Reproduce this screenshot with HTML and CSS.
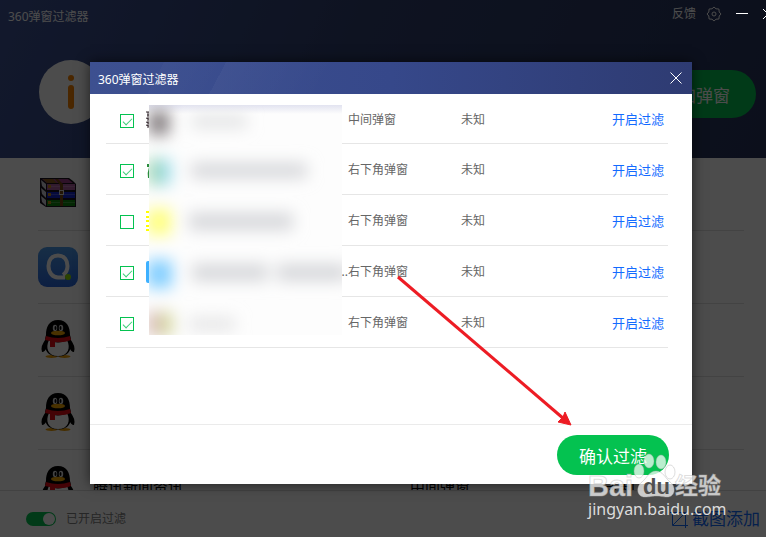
FILE: index.html
```html
<!DOCTYPE html>
<html lang="zh-CN">
<head>
    <meta charset="UTF-8">
    <title>360弹窗过滤器</title>
    <link rel="stylesheet" href="styles.css">
</head>
<body>
    <!-- shared icons -->
    <svg class="sprites" aria-hidden="true">
        <symbol id="qq" viewBox="0 0 40 40">
            <ellipse cx="13.500" cy="36.500" rx="6" ry="1.500" fill="#e89a00"/>
            <ellipse cx="26.500" cy="36.500" rx="6" ry="1.500" fill="#e89a00"/>
            <path d="M8 19Q2 26 4 32Q7 32 9 27ZM32 19Q38 26 36 32Q33 32 31 27Z" fill="#000"/>
            <path d="M20 0C11 0 8 7 8 15C6 21 6 30 11 34Q20 39 29 34C34 30 34 21 32 15C32 7 29 0 20 0Z" fill="#000"/>
            <path d="M11 20Q20 25 29 20C33 28 30 36 20 36C10 36 7 28 11 20Z" fill="#fff"/>
            <ellipse cx="17" cy="8" rx="2.200" ry="3.300" fill="#ddd"/>
            <ellipse cx="23" cy="8" rx="2.200" ry="3.300" fill="#ddd"/>
            <ellipse cx="17.500" cy="8" rx="1" ry="2" fill="#000"/>
            <ellipse cx="22.500" cy="8" rx="1" ry="2" fill="#000"/>
            <ellipse cx="20" cy="13" rx="7" ry="2.300" fill="#f5a800"/>
            <path d="M8 16Q20 20 32 16L33 20Q26 23 17 22V27H12V21L7 20Z" fill="#e30b16"/>
        </symbol>
    </svg>

    <div class="app">
        <header class="app-header">
            <div class="title-bar">
                <h1>360弹窗过滤器</h1>
                <a href="#feedback">反馈</a>
                <button class="icon-btn" aria-label="设置">
                    <svg width="16" height="16" viewBox="0 0 16 16" fill="none" stroke="#fff">
                        <path d="M8 1L10 2.800L12.900 3L13.200 6L15 8L13.200 10L12.900 13L10 13.200L8 15L6 13.200L3.100 13L2.800 10L1 8L2.800 6L3.100 3L6 2.800Z"/>
                        <circle cx="8" cy="8" r="2"/>
                    </svg>
                </button>
                <button class="icon-btn window-btn" aria-label="最小化">
                    <svg width="12" height="12" viewBox="0 0 12 12" stroke="#fff"><path d="M0 5.500H12"/></svg>
                </button>
                <button class="icon-btn window-btn" aria-label="关闭">
                    <svg width="12" height="12" viewBox="0 0 12 12" stroke="#fff"><path d="M1 1L11 11M11 1L1 11"/></svg>
                </button>
            </div>
            <div class="banner">
                <svg width="64" height="64" viewBox="0 0 64 64">
                    <circle cx="32" cy="32" r="32" fill="#fff"/>
                    <circle cx="32" cy="18" r="3" fill="#f78200"/>
                    <rect x="29" y="25" width="6" height="24" rx="3" fill="#f78200"/>
                </svg>
                <button class="add-btn">添加弹窗</button>
            </div>
        </header>

        <ul class="app-list">
            <li>
                <svg width="40" height="40" viewBox="0 0 40 40">
                    <path d="M2 4H31L35 7L38 10V33H8L2 29Z" fill="#18121c"/>
                    <path d="M4 5H30L35 9H9Z" fill="#9a3c86"/>
                    <path d="M5 5H15L19 9H9Z" fill="#8a5a1e"/>
                    <path d="M9 10H37V16H9Z" fill="#a85a9c"/>
                    <path d="M9 18H37V24H9Z" fill="#1726cd"/>
                    <path d="M9 26H37V32H9Z" fill="#108710"/>
                    <path d="M3 6L8 10V16L4 12ZM3 14L8 18V24L4 20ZM3 22L8 26V32L4 28Z" fill="#cfcfd9"/>
                    <path d="M10 12.500H37M10 20.500H37M10 28.500H37" stroke="#fff" stroke-opacity=".2"/>
                    <path d="M10 11H13V14H10ZM10 19H13V22H10ZM10 27H13V30H10Z" fill="#c78b17"/>
                    <path d="M17 5H20L25 10V32H22V11Z" fill="#754713"/>
                    <rect x="21.500" y="16.500" width="4" height="4" fill="none" stroke="#ddd"/>
                </svg>
            </li>
            <li>
                <svg width="40" height="40" viewBox="0 0 40 40">
                    <defs>
                        <linearGradient id="browser" x2="0" y2="1">
                            <stop stop-color="#4d9bea"/>
                            <stop offset="1" stop-color="#2967dc"/>
                        </linearGradient>
                    </defs>
                    <rect width="40" height="40" rx="9" fill="url(#browser)"/>
                    <path d="M20 8.500C13.500 8.500 10.500 13.500 10.500 19C10.500 26 15 30.500 20 30.500H27M20 8.500C26.500 8.500 29.500 13.500 29.500 19C29.500 23 28 26 25 28" fill="none" stroke="#fff" stroke-width="4"/>
                    <circle cx="30" cy="30" r="3" fill="#92e200"/>
                </svg>
            </li>
            <li><svg width="40" height="40"><use href="#qq"/></svg></li>
            <li><svg width="40" height="40"><use href="#qq"/></svg></li>
            <li>
                <svg width="40" height="40"><use href="#qq"/></svg>
                <span class="app-name">腾讯新闻资讯</span>
                <span class="app-type">中间弹窗</span>
                <span>未知</span>
            </li>
        </ul>

        <footer class="app-footer">
            <input type="checkbox" id="filter-on" class="switch" checked>
            <label for="filter-on">已开启过滤</label>
            <a href="#capture">
                <svg width="18" height="18" viewBox="0 0 18 18" fill="none" stroke="#136bff">
                    <path d="M0 2.500H15.500V18M2.500 0V15.500H18M3 15L15 3"/>
                </svg>
                截图添加
            </a>
        </footer>

        <div class="overlay">
            <section class="dialog" role="dialog" aria-labelledby="dialog-title">
                <div class="dialog-header">
                    <h2 id="dialog-title">360弹窗过滤器</h2>
                    <button class="icon-btn" aria-label="关闭">
                        <svg width="12" height="12" viewBox="0 0 12 12" stroke="#fff"><path d="M.5.5L11.500 11.500M11.500.5L.5 11.500"/></svg>
                    </button>
                </div>
                <div class="dialog-body">
                    <table>
                        <colgroup>
                            <col class="col-check"><col class="col-name"><col class="col-type"><col><col class="col-action">
                        </colgroup>
                        <tbody>
                            <tr>
                                <td><input type="checkbox" class="check" aria-label="选择第1项" checked></td>
                                <td><svg class="item-icon" width="24" height="24" viewBox="0 0 24 24"><path d="M0 4H5M1 7H5M0 10L5 12M0 14L5 16M0 17L5 19M2 4V20" stroke="#34282e"/></svg></td>
                                <td>中间弹窗</td>
                                <td>未知</td>
                                <td><a href="#filter1">开启过滤</a></td>
                            </tr>
                            <tr>
                                <td><input type="checkbox" class="check" aria-label="选择第2项" checked></td>
                                <td><svg class="item-icon" width="24" height="24" viewBox="0 0 24 24"><path d="M1 6H6V7H3V9H1ZM3 9H6V20H2Q1 15 3 9Z" fill="#2a8c3c"/></svg></td>
                                <td>右下角弹窗</td>
                                <td>未知</td>
                                <td><a href="#filter2">开启过滤</a></td>
                            </tr>
                            <tr>
                                <td><input type="checkbox" class="check" aria-label="选择第3项"></td>
                                <td><svg class="item-icon" width="24" height="24" viewBox="0 0 24 24"><path d="M0 3H24M0 8H24M0 12H24M0 17H24M0 21H24" stroke="#ffff00" stroke-width="2"/></svg></td>
                                <td>右下角弹窗</td>
                                <td>未知</td>
                                <td><a href="#filter3">开启过滤</a></td>
                            </tr>
                            <tr>
                                <td><input type="checkbox" class="check" aria-label="选择第4项" checked></td>
                                <td>
                                    <div class="item">
                                        <svg class="item-icon" width="24" height="24" viewBox="0 0 24 24"><rect y="1" width="24" height="22" rx="2" fill="#3db0ff"/></svg>
                                        <span>...</span>
                                    </div>
                                </td>
                                <td>右下角弹窗</td>
                                <td>未知</td>
                                <td><a href="#filter4">开启过滤</a></td>
                            </tr>
                            <tr>
                                <td><input type="checkbox" class="check" aria-label="选择第5项" checked></td>
                                <td></td>
                                <td>右下角弹窗</td>
                                <td>未知</td>
                                <td><a href="#filter5">开启过滤</a></td>
                            </tr>
                        </tbody>
                    </table>
                    <!-- blurred names -->
                    <svg class="mosaic" width="193" height="230" viewBox="0 0 193 230">
                        <defs>
                            <filter id="soft" x="-50%" y="-100%" width="200%" height="300%"><feGaussianBlur stdDeviation="8"/></filter>
                            <linearGradient id="edge" x2="0" y2="1"><stop stop-color="#e2e3f0"/><stop offset="1" stop-color="#fdfdfd"/></linearGradient>
                        </defs>
                        <rect width="193" height="230" fill="#fdfdfd"/>
                        <rect width="193" height="9" fill="url(#edge)"/>
                        <g filter="url(#soft)">
                            <rect x="0" y="6" width="20" height="24" fill="#80797c"/>
                            <rect x="0" y="54" width="12" height="26" fill="#92d0a0"/>
                            <rect x="10" y="54" width="12" height="26" fill="#9bdcea"/>
                            <rect x="-2" y="104" width="24" height="26" fill="#ffff7c"/>
                            <rect x="-2" y="155" width="25" height="28" fill="#80ceff"/>
                            <rect x="-2" y="207" width="14" height="24" fill="#d8b8b8"/>
                            <rect x="10" y="207" width="14" height="24" fill="#d6d8a0"/>
                            <g fill="#d6d7da">
                                <rect x="43" y="10" width="55" height="13" fill="#e2e3e4"/>
                                <rect x="42" y="58" width="116" height="15"/>
                                <rect x="40" y="108" width="104" height="17"/>
                                <rect x="43" y="159" width="76" height="17"/>
                                <rect x="128" y="159" width="70" height="17"/>
                                <rect x="40" y="212" width="46" height="14" fill="#e6e6e7"/>
                            </g>
                        </g>
                    </svg>
                </div>
                <div class="dialog-footer">
                    <button class="confirm-btn">确认过滤</button>
                </div>
                <svg class="arrow" width="180" height="156" viewBox="0 0 180 156">
                    <path d="M4 3L170 145" stroke="#ed1c24" stroke-width="3"/>
                    <path d="M177 151L164 148L169 143L171 138Z" fill="#ed1c24" stroke="#ed1c24"/>
                </svg>
            </section>
        </div>

        <svg class="watermark" width="144" height="72" viewBox="0 0 144 72">
            <g fill="#fff" fill-opacity=".72" stroke="#aaa" stroke-opacity=".4">
                <text class="wm-latin" x="2" y="45">Bai</text>
                <path d="M70 20C63 20 61 27 56 31C50 35 50 46 59 46C64 46 66 45 70 45C75 45 77 46 81 46C90 46 90 35 84 31C79 27 77 20 70 20Z"/>
                <ellipse cx="53" cy="20" rx="5" ry="7"/>
                <ellipse cx="63" cy="10" rx="5" ry="7"/>
                <ellipse cx="75" cy="11" rx="5" ry="7"/>
                <ellipse cx="84" cy="21" rx="5" ry="7"/>
                <text class="wm-cjk" x="89" y="43">经验</text>
            </g>
            <text class="wm-du" x="57" y="43">du</text>
            <text class="wm-url" x="2" y="64">jingyan.baidu.com</text>
        </svg>
    </div>
</body>
</html>
```

FILE: styles.css
```css
* {
    box-sizing: border-box;
}
body {
    margin: 0;
    height: 100vh;
    overflow: hidden;
    font-family: "Noto Sans", "Noto Sans CJK SC", sans-serif;
    font-size: 12px;
    line-height: 18px;
    color: #666;
}
h1, h2 {
    margin: 0;
    font-size: 12px;
    font-weight: normal;
    color: #fff;
}
a {
    color: #136bff;
    text-decoration: none;
}
button {
    border: none;
    font-family: inherit;
    color: #fff;
    cursor: pointer;
}
svg {
    display: block;
    flex-shrink: 0;
}
.sprites {
    position: absolute;
    width: 0;
    height: 0;
}
.icon-btn {
    padding: 0;
    background: none;
}

/* main window, slightly larger than the viewport */
.app {
    position: relative;
    display: flex;
    flex-direction: column;
    width: calc(100% + 16px);
    height: calc(100% + 9px);
    background: #fff;
}
.app-header {
    height: 158px;
    flex-shrink: 0;
    background: linear-gradient(115deg, #3d5296 0%, #30406f 45%, #28345c 100%);
}
.title-bar {
    display: flex;
    align-items: center;
    height: 28px;
    padding: 0 8px;
}
.title-bar h1 {
    flex: 1;
    padding-top: 6px;
}
.title-bar a {
    margin-right: 10px;
    color: #fff;
}
.window-btn {
    position: relative;
    z-index: 2;
    margin-left: 14px;
}
.banner {
    display: flex;
    align-items: center;
    justify-content: space-between;
    padding: 32px 26px 0 39px;
}
.add-btn {
    height: 48px;
    margin-top: 4px;
    padding: 0 26px;
    border-radius: 24px;
    background: #04c250;
    font-size: 17px;
}
.app-list {
    flex: 1;
    min-height: 0;
    margin: 0;
    padding: 0 38px;
    overflow: hidden;
    list-style: none;
    font-size: 15px;
    color: #000;
}
.app-list li {
    display: flex;
    align-items: center;
    height: 73px;
    border-bottom: 1px solid #e0e0e0;
}
.app-name {
    width: 317px;
    margin-left: 15px;
}
.app-type {
    width: 195px;
}
.app-footer {
    display: flex;
    align-items: center;
    height: 56px;
    padding: 0 22px 0 26px;
    border-top: 1px solid #dcdcdc;
}
.app-footer label {
    flex: 1;
    margin-left: 10px;
    color: #808080;
}
.app-footer a {
    display: flex;
    align-items: center;
    gap: 4px;
    font-size: 17px;
}
.switch {
    appearance: none;
    display: flex;
    justify-content: flex-end;
    width: 30px;
    height: 14px;
    margin: 0;
    padding: 1px;
    border-radius: 7px;
    background: #04c250;
}
.switch::after {
    content: "";
    width: 12px;
    height: 12px;
    border-radius: 50%;
    background: #fff;
}

/* dialog */
.overlay {
    position: absolute;
    inset: 0;
    display: flex;
    padding: 62px 90px;
    background: rgba(0, 0, 0, .7);
}
.dialog {
    position: relative;
    flex: 1;
    display: flex;
    flex-direction: column;
    background: #fff;
    box-shadow: 0 0 12px rgba(0, 0, 0, .6);
}
.dialog-header {
    display: flex;
    align-items: center;
    justify-content: space-between;
    height: 32px;
    padding: 0 10px 0 8px;
    background:
        linear-gradient(118deg, transparent 12%, rgba(255, 255, 255, .02) 12%, transparent 22%, rgba(255, 255, 255, .03) 22%, transparent 40%),
        linear-gradient(90deg, #3d5090, #36488a 50%, #2e3b72);
}
.dialog-header h2 {
    padding-top: 3px;
}
.dialog-body {
    position: relative;
    flex: 1;
    padding: 0 24px 0 16px;
}
table {
    width: 100%;
    table-layout: fixed;
    border-collapse: collapse;
}
td {
    height: 51px;
    padding: 3px 0 0;
    border-bottom: 1px solid #e6e6e6;
}
tr:first-child td {
    height: 49px;
}
.col-check {
    width: 40px;
}
.col-name {
    width: 202px;
}
.col-type {
    width: 113px;
}
.col-action {
    width: 56px;
}
td a {
    font-size: 13px;
}
.item {
    display: flex;
    align-items: center;
    justify-content: space-between;
}
.check {
    appearance: none;
    display: block;
    width: 14px;
    height: 14px;
    margin: 2px 0 0 14px;
    border: 1px solid #04c250;
}
.check:checked::after {
    content: "";
    display: block;
    width: 8px;
    height: 4px;
    margin: 3px 2px;
    border: solid #3dd078;
    border-width: 0 0 1px 1px;
    transform: rotate(-45deg);
}
.mosaic {
    position: absolute;
    top: 11px;
    left: 59px;
}
.dialog-footer {
    display: flex;
    justify-content: flex-end;
    padding: 10px 23px 9px;
    border-top: 1px solid #ebebeb;
}
.confirm-btn {
    height: 40px;
    padding: 0 22px;
    border-radius: 20px;
    background: #04c250;
    font-size: 17px;
}
.arrow {
    position: absolute;
    right: 118px;
    bottom: 54px;
}

.watermark {
    position: absolute;
    right: 52px;
    bottom: 23px;
}
.wm-latin {
    font: bold 29px "Liberation Sans", sans-serif;
}
.wm-du {
    font: bold 22px "Liberation Sans", sans-serif;
    fill: #505050;
}
.wm-cjk {
    font: bold 23px "Noto Sans CJK SC", sans-serif;
}
.wm-url {
    font-size: 16px;
    fill: #dcdcdc;
}
```
